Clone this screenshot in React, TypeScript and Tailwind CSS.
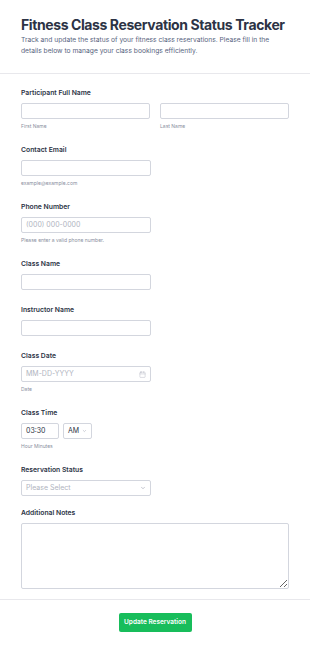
import { ChevronDown, Calendar } from "lucide-react";

const font = { fontFamily: "Inter, 'Noto Sans', sans-serif" };

function Label({ children }: { children: React.ReactNode }) {
  return (
    <div className="h-[10px] text-[6.8px] leading-[10px] font-semibold text-[#2c3345]">
      {children}
    </div>
  );
}

function Sub({ children }: { children: React.ReactNode }) {
  return (
    <div className="mt-[4px] h-[7px] text-[5px] leading-[7px] text-[#8a8fa0]">
      {children}
    </div>
  );
}

function Box({
  className = "",
  children,
}: {
  className?: string;
  children?: React.ReactNode;
}) {
  return (
    <div
      className={`flex h-[16px] items-center rounded-[2px] border border-[#d3d6de] bg-white px-[4px] text-[7px] ${className}`}
    >
      {children}
    </div>
  );
}

export default function App() {
  return (
    <div style={font} className="min-h-[648px] w-[310px] bg-white">
      {/* header */}
      <div className="border-b border-[#e8e8ec] px-[21px] pt-[16px] pb-[16px]">
        <h1 className="text-[14px] leading-[18px] font-bold tracking-[-0.4px] whitespace-nowrap text-[#2c3345]">
          Fitness Class Reservation Status Tracker
        </h1>
        <p className="mt-[1px] text-[6.7px] leading-[11px] text-[#57647e]">
          Track and update the status of your fitness class reservations. Please
          fill in the details below to manage your class bookings efficiently.
        </p>
      </div>

      <div className="flex flex-col gap-[15px] px-[21px] pt-[14px] pb-[10px]">
        <div>
          <Label>Participant Full Name</Label>
          <div className="mt-[5px] grid grid-cols-2 gap-[10px]">
            <div>
              <Box />
              <Sub>First Name</Sub>
            </div>
            <div>
              <Box />
              <Sub>Last Name</Sub>
            </div>
          </div>
        </div>

        <div>
          <Label>Contact Email</Label>
          <Box className="mt-[5px] w-[130px]" />
          <Sub>example@example.com</Sub>
        </div>

        <div>
          <Label>Phone Number</Label>
          <Box className="mt-[5px] w-[130px] text-[#b0b4c0]">(000) 000-0000</Box>
          <Sub>Please enter a valid phone number.</Sub>
        </div>

        <div>
          <Label>Class Name</Label>
          <Box className="mt-[5px] w-[130px]" />
        </div>

        <div>
          <Label>Instructor Name</Label>
          <Box className="mt-[5px] w-[130px]" />
        </div>

        <div>
          <Label>Class Date</Label>
          <Box className="mt-[5px] w-[130px] justify-between text-[#b0b4c0]">
            <span>MM-DD-YYYY</span>
            <Calendar size={7} strokeWidth={1.5} className="text-[#b0b4c0]" />
          </Box>
          <Sub>Date</Sub>
        </div>

        <div>
          <Label>Class Time</Label>
          <div className="mt-[5px] flex gap-[4px]">
            <Box className="w-[38px] text-[#2c3345]">03:30</Box>
            <Box className="w-[29px] gap-[3px] text-[#2c3345]">
              <span>AM</span>
              <ChevronDown size={6} strokeWidth={2} className="text-[#8a8fa0]" />
            </Box>
          </div>
          <Sub>Hour Minutes</Sub>
        </div>

        <div>
          <Label>Reservation Status</Label>
          <Box className="mt-[5px] w-[130px] justify-between text-[#b0b4c0]">
            <span>Please Select</span>
            <ChevronDown size={6} strokeWidth={2} className="text-[#8a8fa0]" />
          </Box>
        </div>

        <div className="-mt-[3px]">
          <Label>Additional Notes</Label>
          <textarea className="mt-[5px] block h-[66px] w-full resize-y rounded-[2px] border border-[#d3d6de] bg-white" />
        </div>
      </div>

      <div className="flex justify-center border-t border-[#e8e8ec] pt-[13px] pb-[16px]">
        <button className="h-[19px] w-[73px] rounded-[2px] bg-[#18bd5b] text-[6.5px] font-semibold text-white">
          Update Reservation
        </button>
      </div>
    </div>
  );
}
